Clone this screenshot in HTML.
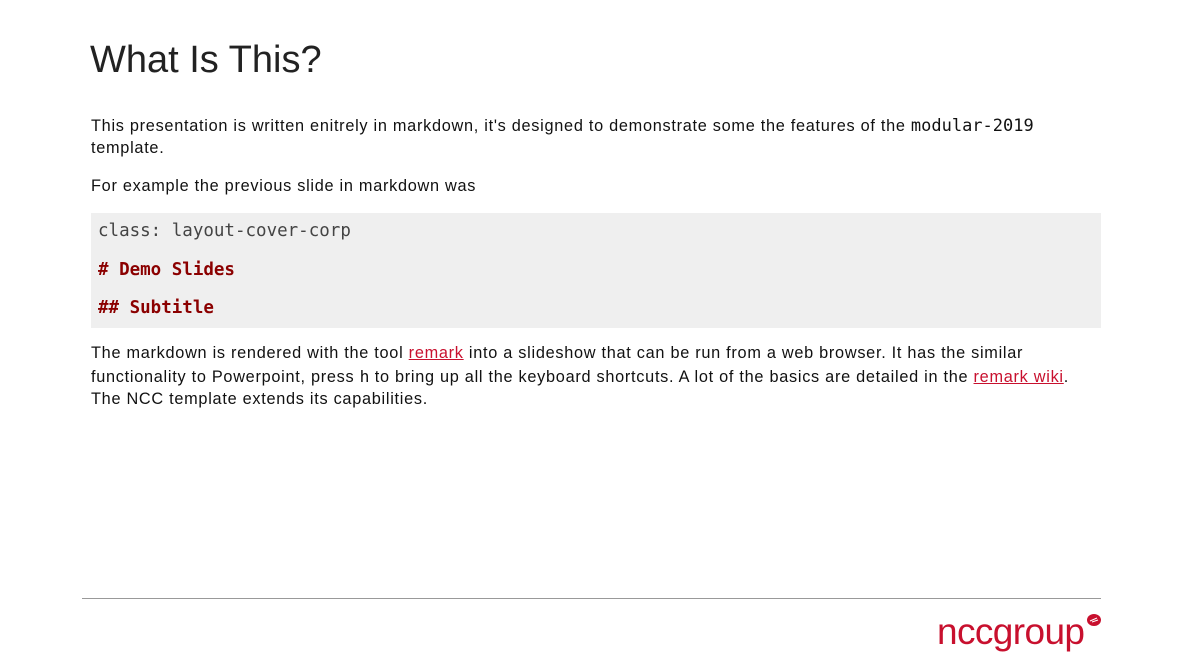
<!DOCTYPE html>
<html><head><meta charset="utf-8"><style>
body{margin:0;width:1179px;height:664px;background:#fff;position:relative;overflow:hidden;font-family:"Liberation Sans",sans-serif;color:#111;}
.a{position:absolute;white-space:nowrap;}
.t{font-size:16.3px;letter-spacing:0.72px;}
.m{font-family:"DejaVu Sans Mono","Liberation Mono",monospace;letter-spacing:0;}
a{color:#c8102e;text-decoration:underline;}
.code{position:absolute;left:91px;top:213px;width:1010px;height:115px;background:#efefef;}
.c{font-family:"DejaVu Sans Mono",monospace;font-size:17.5px;position:absolute;left:98px;white-space:nowrap;}
</style></head><body>
<div class="a" style="left:90px;top:39px;font-size:38px;color:#222;">What Is This?</div>
<div class="a t" style="left:91px;top:116px;">This presentation is written enitrely in markdown, it's designed to demonstrate some the features of the <span class="m" style="font-size:17px">modular-2019</span></div>
<div class="a t" style="left:91px;top:139px;">template.</div>
<div class="a t" style="left:91px;top:177px;">For example the previous slide in markdown was</div>
<div class="code"></div>
<div class="c" style="top:221px;color:#444;">class: layout-cover-corp</div>
<div class="c" style="top:260px;color:#8b0000;font-weight:bold;"># Demo Slides</div>
<div class="c" style="top:298px;color:#8b0000;font-weight:bold;">## Subtitle</div>
<div class="a t" style="left:91px;top:344px;">The markdown is rendered with the tool <a>remark</a> into a slideshow that can be run from a web browser. It has the similar</div>
<div class="a t" style="left:91px;top:367px;">functionality to Powerpoint, press <span class="m">h</span> to bring up all the keyboard shortcuts. A lot of the basics are detailed in the <a>remark wiki</a>.</div>
<div class="a t" style="left:91px;top:390px;">The NCC template extends its capabilities.</div>
<div style="position:absolute;left:82px;top:598px;width:1019px;height:1px;background:#999;"></div>
<div class="a" style="left:937px;top:611px;font-size:37px;color:#c8102e;letter-spacing:-0.6px;font-family:'Liberation Sans',sans-serif;">nccgroup</div>
<svg class="a" style="left:1085px;top:612px" width="18" height="16"><ellipse cx="9" cy="8" rx="7" ry="6" fill="#c8102e"/><path d="M5 9 L12 6 M7 10 L13 8" stroke="#fff" stroke-width="1"/></svg>
</body></html>
